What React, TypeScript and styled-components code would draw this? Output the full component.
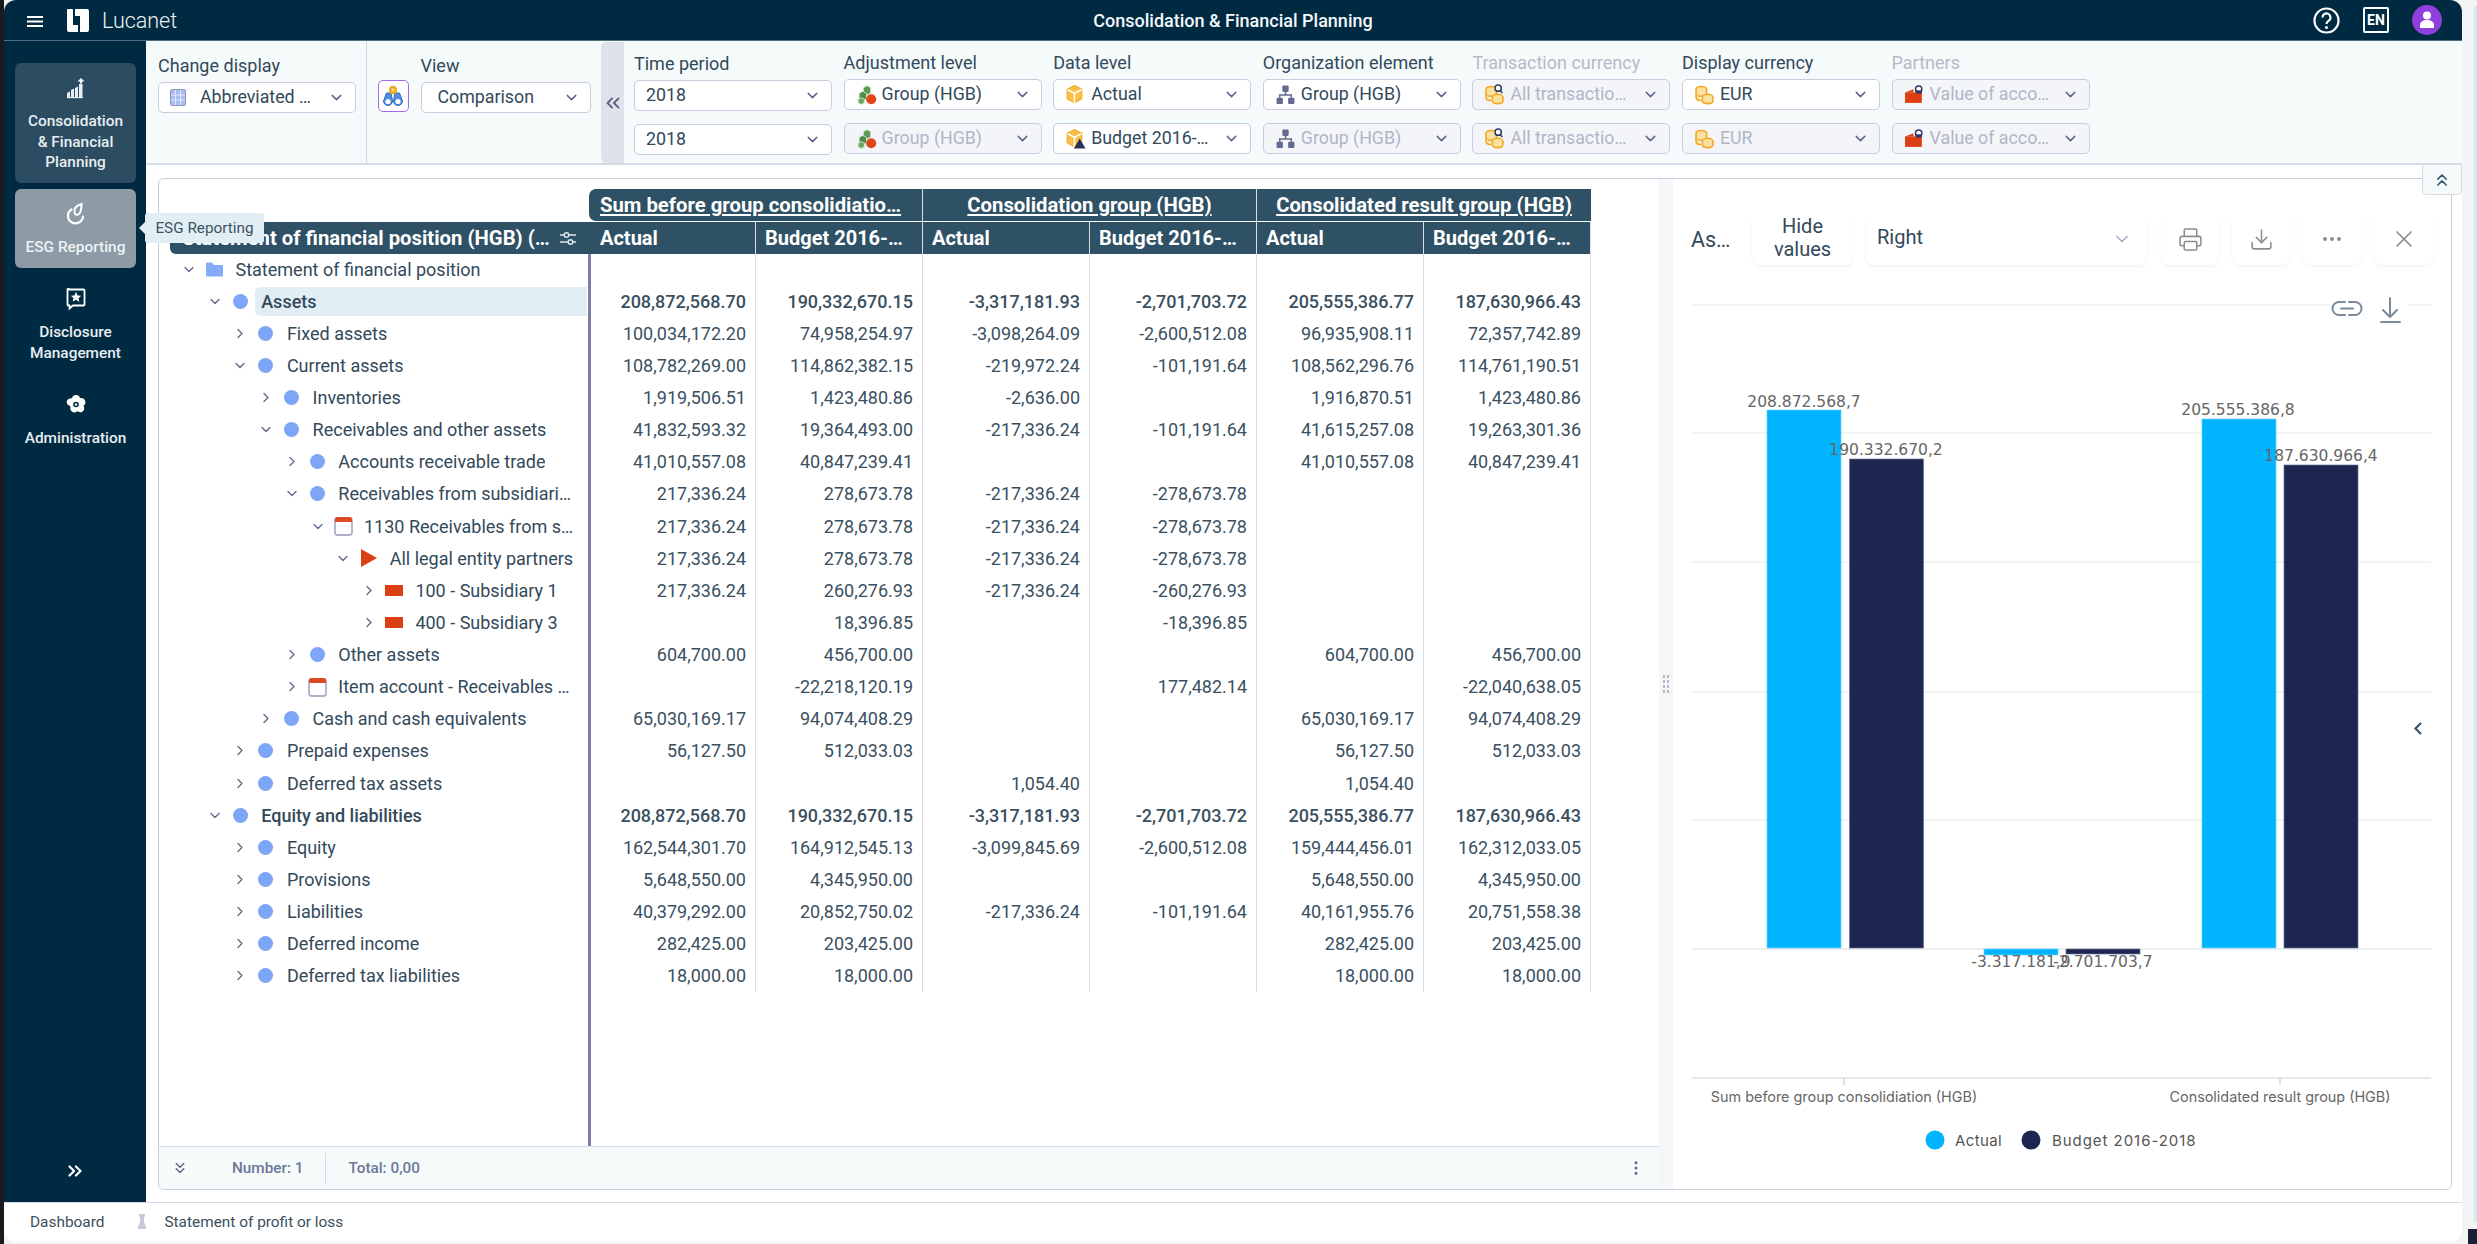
import React from "react";
import styled, { createGlobalStyle } from "styled-components";
import {
  ChevronDown, ChevronRight, ChevronsLeft, ChevronsRight, ChevronsUp, ChevronsDown,
  EllipsisVertical, Ellipsis, Printer, Download, X,
} from "lucide-react";

const Global = createGlobalStyle`
  * { box-sizing: border-box; }
  html, body { margin: 0; padding: 0; width: 2477px; height: 1244px; overflow: hidden; }
  body { font-family: Roboto, "Liberation Sans", sans-serif; color: #2b4153; }
`;

const Page = styled.div`
  width: 2477px; height: 1244px; display: flex; position: relative;
  background: linear-gradient(to right, #1b1b1f 0 4px, #f4f4f5 4px);
`;
const Win = styled.div`
  margin-left: 4px; width: 2458px; height: 1242px; display: flex; flex-direction: column;
  background: #fff; border-radius: 12px; overflow: hidden;
`;
const RightEdge = styled.div`
  flex: 1; display: flex; justify-content: flex-end; flex-direction: column; align-items: flex-end;
`;
const RightStrip = styled.div`
  width: 3px; margin-top: 6px; flex: 1; background: #cfe9fb;
`;
const RightCorner = styled.div`
  width: 9px; height: 15px; margin-top: 6px; background: #1a2035;
`;

const TopBar = styled.header`
  height: 41px; flex: none; background: #002a42; display: grid; grid-template-columns: 1fr auto 1fr;
  align-items: center; color: #fff; border-bottom: 1px solid #54707f;
`;
const Brand = styled.div`
  display: flex; align-items: center; padding-left: 23px;
`;
const BrandName = styled.span`
  font-size: 21.5px; font-weight: 300; margin-left: 12px; color: #eef3f6;
`;
const Title = styled.div`
  font-size: 18px; font-weight: 500; color: #f4f7f9;
`;
const TopIcons = styled.div`
  display: flex; justify-content: flex-end; align-items: center; padding-right: 20px; gap: 23px;
`;
const EnBadge = styled.div`
  width: 26px; height: 26px; border: 2px solid #fff; border-radius: 2px; font-size: 14px; font-weight: 700;
  display: flex; align-items: center; justify-content: center;
`;
const Avatar = styled.div`
  width: 30px; height: 30px; border-radius: 50%; background: #8f3fdc; display: flex; align-items: center; justify-content: center;
`;

const Body = styled.div`
  flex: 1; display: flex; min-height: 0;
`;
const Sidebar = styled.nav`
  width: 142px; flex: none; background: #002a42; padding: 22px 11px 20px; display: flex; flex-direction: column; gap: 6px;
`;
const NavItem = styled.div<{ $tone?: "active" | "hover" }>`
  position: relative; width: 121px; padding: 14px 4px 10.5px; border-radius: 6px; display: flex; flex-direction: column; align-items: center;
  background: ${(p) => (p.$tone === "active" ? "#2c4c61" : p.$tone === "hover" ? "#8c9ba6" : "transparent")};
  color: ${(p) => (p.$tone === "hover" ? "#eef2f5" : "#e8eef2")};
`;
const NavIcon = styled.div`
  height: 22px; margin-bottom: 12px; display: flex; align-items: center; justify-content: center;
`;
const NavText = styled.div`
  font-size: 15.4px; line-height: 20.5px; text-align: center; font-weight: 500; white-space: nowrap;
`;
const Tooltip = styled.div`
  position: absolute; left: calc(100% + 9px); top: 24px; width: 119px; height: 30px; background: #e1eff5; border-radius: 3px;
  font-size: 15.3px; color: #3d5364; display: flex; align-items: center; justify-content: center; z-index: 5; font-weight: 400;
  &::before {
    content: ""; position: absolute; left: -6px; top: 9px; border-style: solid; border-width: 6px 6px 6px 0;
    border-color: transparent #e1eff5 transparent transparent;
  }
`;
const SideExpand = styled.div`
  margin-top: auto; display: flex; justify-content: center; color: #fff;
`;

const Main = styled.main`
  flex: 1; min-width: 0; display: flex; flex-direction: column; position: relative;
`;
const Toolbar = styled.div`
  height: 124px; flex: none; background: #f5fafb; border-bottom: 2px solid #d8dbe6; display: flex;
`;
const ChangeSection = styled.div`
  width: 221px; flex: none; padding: 15px 0 0 12px; border-right: 1.5px solid #d0d3e0;
`;
const ViewSection = styled.div`
  display: flex; width: 234px; flex: none; padding: 15px 0 0 10.5px; gap: 12px;
`;
const ViewIconButton = styled.div`
  width: 31px; height: 32px; margin-top: 24px; background: #fff; border: 1.5px solid #a868ea; border-radius: 5px;
  display: flex; align-items: center; justify-content: center;
`;
const ViewCol = styled.div`
  width: 170px;
`;
const Label = styled.div<{ $muted?: boolean }>`
  font-size: 18px; line-height: 20px; margin-bottom: 6px; white-space: nowrap;
  color: ${(p) => (p.$muted ? "#b6bac9" : "#32495a")};
`;
const Collapse = styled.div`
  width: 23px; height: 121px; margin-top: 1px; flex: none; background: #dfe2ea; border-radius: 5px 0 0 5px; color: #54607f;
  display: flex; align-items: center; justify-content: center;
`;
const Filters = styled.div`
  display: flex; gap: 11.6px; padding-left: 10px;
`;
const FilterCol = styled.div<{ $nudge?: boolean }>`
  width: 198px; padding-top: ${(p) => (p.$nudge ? 13 : 12)}px; display: flex; flex-direction: column;
`;
const Select = styled.div<{ $w?: number; $off?: boolean }>`
  height: 31px; width: ${(p) => (p.$w ? p.$w + "px" : "100%")}; border: 1.5px solid #c9ccdd; border-radius: 5px;
  background: ${(p) => (p.$off ? "#f4f5f8" : "#fff")}; display: flex; align-items: center; padding: 0 10px 2px 11px; flex: none;
  font-size: 17.8px; color: ${(p) => (p.$off ? "#b0b5c7" : "#32495a")}; & + & { margin-top: 13px; }
`;
const SelectIcon = styled.span<{ $wide?: boolean }>`
  display: flex; width: 21px; flex: none; margin-right: ${(p) => (p.$wide ? 9 : 5)}px; align-items: center; padding-top: 2px;
`;
const SelectText = styled.span<{ $inset?: boolean }>`
  flex: 1; white-space: nowrap; overflow: hidden; padding-left: ${(p) => (p.$inset ? 5 : 0)}px;
`;
const Chev = styled.span`
  display: flex; color: #5d6488; margin-left: 4px; padding-top: 2px;
`;

const Panel = styled.section`
  margin: 13px 10px 12px 12px; flex: 1; min-height: 0; border: 1px solid #c8cbdc; border-radius: 6px; display: flex; overflow: hidden;
`;
const CollapseTab = styled.div`
  position: absolute; right: 0; top: 124px; width: 40px; height: 30px; background: #f5fafb; border: 1px solid #d8dbe6; border-top: 0;
  border-radius: 0 0 5px 5px; display: flex; align-items: center; justify-content: center; color: #3a5a70; z-index: 3;
`;
const TablePane = styled.div`
  width: 1500px; flex: none; display: flex; flex-direction: column;
`;
const TableArea = styled.div`
  flex: 1; min-height: 0; display: flex;
`;
const TreePane = styled.div`
  width: 432px; flex: none; display: flex; flex-direction: column; padding-top: 43px;
`;
const TreeHeader = styled.div`
  margin-left: 11px; height: 32px; flex: none; background: #2e5165; color: #fff; font-weight: 700; font-size: 20.3px; border-radius: 6px 0 0 6px;
  display: flex; align-items: center; padding: 0 14px 0 12px; justify-content: space-between; white-space: nowrap;
`;
const TreeBody = styled.div`
  flex: 1; border-right: 3px solid #7b7fa6;
`;
const RowStack = styled.div`
  margin-top: -1px;
`;
const TreeRow = styled.div<{ $level: number }>`
  height: 32.14px; display: flex; align-items: center; padding-left: ${(p) => 22 + 25.7 * p.$level}px; padding-right: 1px;
`;
const Twist = styled.span`
  width: 16px; flex: none; display: flex; justify-content: center; color: #5f6a8a;
`;
const NodeIcon = styled.span`
  width: 29px; margin-left: 3px; flex: none; display: flex; justify-content: center; align-items: center;
`;
const Bullet = styled.span`
  width: 15px; height: 15px; border-radius: 50%; background: #7ea6f7; display: block;
`;
const RowLabel = styled.span<{ $bold?: boolean; $sel?: boolean }>`
  flex: ${(p) => (p.$sel ? 1 : "0 1 auto")}; font-size: 18px; padding-left: 6.5px; white-space: nowrap; overflow: hidden;
  line-height: 29px; font-weight: ${(p) => (p.$bold ? 500 : 400)}; color: #32495a; border-radius: 5px 0 0 5px;
  background: ${(p) => (p.$sel ? "#e1eff5" : "transparent")};
`;
const DataPane = styled.div`
  width: 1000px; padding-top: 10px; display: flex; flex-direction: column;
`;
const GroupRow = styled.div`
  height: 32px; flex: none; display: grid; grid-template-columns: 334px 334px 334px; margin-left: -2px; background: #2e5165; border-radius: 7px 0 0 7px;
`;
const GroupCell = styled.div<{ $left?: boolean }>`
  color: #fff; font-weight: 700; font-size: 20.3px; text-decoration: underline; display: flex; align-items: center;
  justify-content: ${(p) => (p.$left ? "flex-start" : "center")}; padding-left: ${(p) => (p.$left ? 11 : 0)}px;
  border-right: 1.5px solid #d8dde6; white-space: nowrap; &:last-child { border-right: 0; }
`;
const Cols = styled.div`
  display: grid; grid-template-columns: 165px repeat(5, 167px);
`;
const HeadRow = styled(Cols)`
  height: 32px; flex: none; margin-top: 1px; background: #2e5165;
`;
const HeadCell = styled.div`
  color: #fff; font-weight: 700; font-size: 20px; padding-left: 9px; display: flex; align-items: center; white-space: nowrap;
  border-right: 1.5px solid #d8dde6;
`;
const DataRow = styled(Cols)`
  height: 32.14px;
`;
const Cell = styled.div<{ $bold?: boolean }>`
  border-right: 1.5px solid #d9dbe7; display: flex; align-items: center; justify-content: flex-end; padding-right: 9px;
  font-size: 18px; font-weight: ${(p) => (p.$bold ? 500 : 400)}; color: #3a5061; white-space: nowrap;
`;
const Footer = styled.div`
  height: 43px; flex: none; background: #f5fafb; border-top: 1.5px solid #d8dbe6; display: flex; align-items: center; color: #6d7798;
  font-size: 15.3px; font-weight: 500;
`;
const FootChev = styled.span`
  display: flex; width: 73px; padding-left: 12px; color: #5f6a8a;
`;
const FootCell = styled.span`
  display: flex; align-items: center; height: 31px; padding-right: 22px; & + & { border-left: 1.5px solid #d8dbe6; padding-left: 22px; }
`;
const FootMore = styled.span`
  margin-left: auto; margin-right: 14px; display: flex; color: #5f6a8a;
`;
const Splitter = styled.div`
  width: 14px; flex: none; background: #f5f6f7; display: flex; align-items: center; justify-content: center;
`;
const Grip = styled.div`
  display: grid; grid-template-columns: 2px 2px; gap: 2px;
  & > i { width: 2px; height: 3px; background: #b5b8c6; display: block; }
`;
const ChartPane = styled.div`
  flex: 1; min-width: 0; display: flex; flex-direction: column; position: relative;
`;
const ChartHead = styled.div`
  height: 101px; flex: none; padding: 34px 0 0 18px; display: flex; align-items: flex-start;
`;
const ChartTitle = styled.div`
  width: 61px; height: 52px; font-size: 21.5px; display: flex; align-items: center; color: #32495a; flex: none;
`;
const GhostButton = styled.div<{ $w: number; $gap?: number }>`
  width: ${(p) => p.$w}px; height: 52px; flex: none; margin-right: ${(p) => p.$gap ?? 13}px; border-radius: 8px; background: #fff;
  box-shadow: 0 2px 3px rgba(40, 50, 80, .06); display: flex; align-items: center; justify-content: center; color: #8a8d94;
`;
const HideText = styled.span`
  font-size: 20px; line-height: 23px; color: #32495a; text-align: center; padding-bottom: 3px;
`;
const RightSelect = styled(GhostButton)`
  justify-content: space-between; padding: 0 15px 5px 11px; color: #32495a; font-size: 20px;
`;
const ChevLight = styled.span`
  display: flex; color: #a8adc4; padding-top: 5px;
`;
const ChartSvg = styled.svg`
  display: block; flex: none;
`;
const BottomBar = styled.footer`
  height: 40px; flex: none; border-top: 1.5px solid #d8dbe6; display: flex; align-items: center; padding: 0 0 2px 26px; font-size: 15.4px; color: #3a4f60;
`;
const BottomSep = styled.span`
  display: flex; margin: 0 16px 0 32px;
`;

const S = ({ size = 20, children }: { size?: number; children: React.ReactNode }) => (
  <svg width={size} height={size} viewBox="0 0 20 20">{children}</svg>
);

const Burger = () => (
  <svg width="16" height="11" viewBox="0 0 16 11" style={{ marginRight: 23, marginTop: 2 }}>
    <path d="M0 1h16M0 5.500h16M0 10h16" stroke="#fff" strokeWidth="1.800" />
  </svg>
);
const Logo = () => (
  <svg width="24" height="25" viewBox="0 0 24 25">
    <path d="M1 2a1 1 0 0 1 1-1h4a1 1 0 0 1 1 1v15h5v7H3a2 2 0 0 1-2-2z" fill="#fff" />
    <path d="M9 1h12a2 2 0 0 1 2 2v19a2 2 0 0 1-2 2h-7V8H9z" fill="#fff" />
  </svg>
);
const Help = () => (
  <svg width="27" height="27" viewBox="0 0 27 27">
    <circle cx="13.500" cy="13.500" r="12" fill="none" stroke="#fff" strokeWidth="2.200" />
    <path d="M9.500 10.500a4 4 0 1 1 6.300 3.200c-1.500 1-2.300 1.700-2.300 3.300" fill="none" stroke="#fff" strokeWidth="2.200" />
    <circle cx="13.500" cy="20.500" r="1.500" fill="#fff" />
  </svg>
);
const User = () => (
  <svg width="16" height="18" viewBox="0 0 16 18">
    <circle cx="8" cy="4.500" r="4" fill="#fff" />
    <path d="M1 17v-3c0-3 3-5 7-5s7 2 7 5v3z" fill="#fff" />
  </svg>
);
const NavChart = () => (
  <svg width="20" height="22" viewBox="0 0 20 22">
    <path d="M1 20v-4l3-1.500V20zM5 20v-7l3-1.500V20zM9 20v-9l3-1.500V20zM13 20V7h3.500v13z" fill="#e8eef2" />
    <path d="M15 1l3.500 3.500H16v2h-2v-2h-2.500z" fill="#fff" />
    <rect x="1" y="20" width="16" height="1.200" fill="#e8eef2" />
  </svg>
);
const NavEsg = () => (
  <svg width="20" height="24" viewBox="0 0 20 24">
    <path d="M5.500 7.500a7.500 7.500 0 1 0 11.500 7" fill="none" stroke="#fff" strokeWidth="2.200" strokeLinecap="round" />
    <path d="M15.500 2c-5 1.500-8 4-7 8.500.5 2.500 3 3 4.500 1.500 2-2 2.500-6 2.500-10z" fill="none" stroke="#fff" strokeWidth="2" />
  </svg>
);
const NavStar = () => (
  <svg width="20" height="22" viewBox="0 0 20 22">
    <path d="M2.500 1.500h15a1 1 0 0 1 1 1v14a1 1 0 0 1-1 1H7l-3.500 3v-3h-1a1 1 0 0 1-1-1v-15a1 1 0 0 1 1-1z" fill="none" stroke="#fff" strokeWidth="1.800" />
    <path d="M10 4l1.600 3.400 3.600.4-2.700 2.500.8 3.700L10 11.800 6.700 13.600l.8-3.700L4.800 7.800l3.600-.4z" fill="#fff" />
  </svg>
);
const NavFlower = () => (
  <svg width="22" height="22" viewBox="0 0 22 22">
    <path d="M11 1c2.500 0 3.800 1.600 4 3.200 2-.6 4.500.4 5.200 2.700.7 2.300-.3 4-1.700 4.800 1.100 1.700 1.100 4.300-.9 5.700-2 1.400-4 .9-5.100-.3-1 1.300-3.500 2-5.400.6-2-1.400-2.200-3.700-1.400-5.100C4.300 11.800 1.100 10 1.800 7.200 2.500 4.900 5 3.800 7 4.300 7.200 2.600 8.500 1 11 1z" fill="#fff" />
    <circle cx="11" cy="10.500" r="2.800" fill="#002a42" />
    <circle cx="11" cy="10.500" r="1.200" fill="#fff" />
  </svg>
);
const TableIcon = () => (
  <svg width="16" height="17" viewBox="0 0 16 17">
    <rect x=".5" y=".5" width="15" height="16" rx="1.500" fill="#a9bdf3" stroke="#8a98b8" />
    <path d="M5.500 1v15M10.500 1v15M1 6h14M1 11h14" stroke="#dfe7fb" strokeWidth="1" />
  </svg>
);
const CompareIcon = () => (
  <svg width="22" height="24" viewBox="0 0 22 24">
    <path d="M4.500 9L1.500 17a4.500 4.500 0 1 0 9 0L9 9z" fill="#4f8fe2" stroke="#2d6bc4" strokeWidth="1" />
    <path d="M13 9l-1.500 8a4.500 4.500 0 1 0 9 0L17.500 9z" fill="#4f8fe2" stroke="#2d6bc4" strokeWidth="1" />
    <circle cx="6" cy="17.500" r="2.600" fill="#fff" />
    <circle cx="16" cy="17.500" r="2.600" fill="#fff" />
    <circle cx="11" cy="6" r="4.200" fill="#f2a922" />
    <circle cx="11" cy="6" r="1.400" fill="#ffe3a6" />
  </svg>
);
const Cubes = () => (
  <S size={21}>
    <path d="M7 3.500l3.500-2 3.500 2v5l-3.500 2-3.500-2z" fill="#5c9a55" stroke="#d7ecd3" strokeWidth=".8" />
    <path d="M3 9l3.500-2 3.500 2v5l-3.500 2L3 14z" fill="#4f8c49" stroke="#d7ecd3" strokeWidth=".8" />
    <path d="M2 14.500l3-1.500 3 1.500v3.500l-3 1.500-3-1.500z" fill="#6aa863" stroke="#d7ecd3" strokeWidth=".8" />
    <circle cx="14.500" cy="14.500" r="4.800" fill="#e0461a" />
  </S>
);
const Box = ({ warn }: { warn?: boolean }) => (
  <S size={21}>
    <path d="M9 1.500l7 3.500v9l-7 4-7-4V5z" fill="#f8c04a" stroke="#f2a922" strokeWidth="1" />
    <path d="M2.500 5.500L9 9l6.500-3.500M9 9v9" stroke="#fff" strokeWidth="1.500" fill="none" />
    {warn ? <path d="M14 10l5.500 9.500h-11z" fill="#2a2f58" /> : null}
  </S>
);
const Org = () => (
  <S size={21}>
    <rect x="7" y="1.500" width="6" height="6" rx="1" fill="#62698f" />
    <rect x="1.500" y="13" width="6" height="6" rx="1" fill="#62698f" />
    <rect x="12.500" y="13" width="6" height="6" rx="1" fill="#62698f" />
    <path d="M10 7v3.500M4.500 13v-2.500h11V13" fill="none" stroke="#62698f" strokeWidth="1.500" />
  </S>
);
const Coins = ({ search }: { search?: boolean }) => (
  <S size={21}>
    <g fill="#fbe1a0" stroke="#f2a922" strokeWidth="1.500">
      <ellipse cx="7" cy="5" rx="5" ry="2.700" />
      <path d="M2 5v4c0 1.500 2.200 2.700 5 2.700s5-1.200 5-2.700V5" />
      <path d="M2 9v4c0 1.500 2.200 2.700 5 2.700" />
      <ellipse cx="13" cy="12.500" rx="5" ry="2.700" />
      <path d="M8 12.500v3.500c0 1.500 2.200 2.700 5 2.700s5-1.200 5-2.700v-3.500" />
    </g>
    {search ? (
      <g fill="none" stroke="#2f3a66" strokeWidth="1.400">
        <circle cx="13.500" cy="4" r="3" fill="#fff" />
        <path d="M15.500 6.500l2 2" />
      </g>
    ) : null}
  </S>
);
const Partner = () => (
  <S size={21}>
    <rect x="1" y="8" width="16" height="10" fill="#dd3f12" />
    <path d="M1 8l8-3v3z" fill="#dd3f12" />
    <circle cx="14" cy="5" r="3" fill="#fff" stroke="#2f3a66" strokeWidth="1.400" />
    <rect x="11" y="6" width="6" height="3" fill="#2f3a66" />
  </S>
);
const Folder = () => (
  <svg width="19" height="15" viewBox="0 0 19 15">
    <path d="M1 1.500a1 1 0 0 1 1-1h5l2 2.500h8a1 1 0 0 1 1 1v9.500a1 1 0 0 1-1 1H2a1 1 0 0 1-1-1z" fill="#85aaf7" />
  </svg>
);
const Account = () => (
  <svg width="19" height="20" viewBox="0 0 19 20">
    <rect x="1" y="2" width="17" height="17" rx="2.500" fill="#fff" stroke="#adb0c8" strokeWidth="1.800" />
    <path d="M1 6V3.500A2.500 2.500 0 0 1 3.500 1h12A2.500 2.500 0 0 1 18 3.500V6z" fill="#dd4a24" />
  </svg>
);
const PartnerPlay = () => (
  <svg width="18" height="20" viewBox="0 0 18 20">
    <path d="M1 1l16 9-16 9z" fill="#dc3f13" />
  </svg>
);
const PartnerBar = () => (
  <svg width="18" height="11" viewBox="0 0 18 11"><rect width="18" height="11" fill="#dc3f13" /></svg>
);
const Pawn = () => (
  <svg width="12" height="17" viewBox="0 0 12 17">
    <path d="M3 1h6v2l-1 1v5l2 5v2H2v-2l2-5V4L3 3z" fill="#c6cad8" />
  </svg>
);
const TwoSliders = () => (
  <svg width="18" height="15" viewBox="0 0 18 15" fill="none" stroke="#dfe6ea" strokeWidth="1.500">
    <path d="M1 4h4M10 4h7M1 11h8M14 11h3" />
    <circle cx="7.500" cy="4" r="2.300" />
    <circle cx="11.500" cy="11" r="2.300" />
  </svg>
);

type Node = { l: number; t: string; open?: boolean; k?: "folder" | "bullet" | "account" | "play" | "bar"; b?: boolean; s?: boolean; v?: string[] };
const sub = ["217,336.24", "278,673.78", "-217,336.24", "-278,673.78", "", ""];
const total = ["208,872,568.70", "190,332,670.15", "-3,317,181.93", "-2,701,703.72", "205,555,386.77", "187,630,966.43"];
const rows: Node[] = [
  { l: 0, t: "Statement of financial position", open: true, k: "folder" },
  { l: 1, t: "Assets", open: true, b: true, s: true, v: total },
  { l: 2, t: "Fixed assets", v: ["100,034,172.20", "74,958,254.97", "-3,098,264.09", "-2,600,512.08", "96,935,908.11", "72,357,742.89"] },
  { l: 2, t: "Current assets", open: true, v: ["108,782,269.00", "114,862,382.15", "-219,972.24", "-101,191.64", "108,562,296.76", "114,761,190.51"] },
  { l: 3, t: "Inventories", v: ["1,919,506.51", "1,423,480.86", "-2,636.00", "", "1,916,870.51", "1,423,480.86"] },
  { l: 3, t: "Receivables and other assets", open: true, v: ["41,832,593.32", "19,364,493.00", "-217,336.24", "-101,191.64", "41,615,257.08", "19,263,301.36"] },
  { l: 4, t: "Accounts receivable trade", v: ["41,010,557.08", "40,847,239.41", "", "", "41,010,557.08", "40,847,239.41"] },
  { l: 4, t: "Receivables from subsidiari…", open: true, v: sub },
  { l: 5, t: "1130 Receivables from s…", open: true, k: "account", v: sub },
  { l: 6, t: "All legal entity partners", open: true, k: "play", v: sub },
  { l: 7, t: "100 - Subsidiary 1", k: "bar", v: ["217,336.24", "260,276.93", "-217,336.24", "-260,276.93", "", ""] },
  { l: 7, t: "400 - Subsidiary 3", k: "bar", v: ["", "18,396.85", "", "-18,396.85", "", ""] },
  { l: 4, t: "Other assets", v: ["604,700.00", "456,700.00", "", "", "604,700.00", "456,700.00"] },
  { l: 4, t: "Item account - Receivables …", k: "account", v: ["", "-22,218,120.19", "", "177,482.14", "", "-22,040,638.05"] },
  { l: 3, t: "Cash and cash equivalents", v: ["65,030,169.17", "94,074,408.29", "", "", "65,030,169.17", "94,074,408.29"] },
  { l: 2, t: "Prepaid expenses", v: ["56,127.50", "512,033.03", "", "", "56,127.50", "512,033.03"] },
  { l: 2, t: "Deferred tax assets", v: ["", "", "1,054.40", "", "1,054.40", ""] },
  { l: 1, t: "Equity and liabilities", open: true, b: true, v: total },
  { l: 2, t: "Equity", v: ["162,544,301.70", "164,912,545.13", "-3,099,845.69", "-2,600,512.08", "159,444,456.01", "162,312,033.05"] },
  { l: 2, t: "Provisions", v: ["5,648,550.00", "4,345,950.00", "", "", "5,648,550.00", "4,345,950.00"] },
  { l: 2, t: "Liabilities", v: ["40,379,292.00", "20,852,750.02", "-217,336.24", "-101,191.64", "40,161,955.76", "20,751,558.38"] },
  { l: 2, t: "Deferred income", v: ["282,425.00", "203,425.00", "", "", "282,425.00", "203,425.00"] },
  { l: 2, t: "Deferred tax liabilities", v: ["18,000.00", "18,000.00", "", "", "18,000.00", "18,000.00"] },
];
const nodeIcon = (k?: Node["k"]) => {
  if (k === "folder") return <Folder />;
  if (k === "account") return <Account />;
  if (k === "play") return <PartnerPlay />;
  if (k === "bar") return <PartnerBar />;
  return <Bullet />;
};

type Sel = { text: string; icon?: React.ReactNode; off?: boolean };
const filters: { label: string; muted?: boolean; nudge?: boolean; items: Sel[] }[] = [
  { label: "Time period", nudge: true, items: [{ text: "2018" }, { text: "2018" }] },
  { label: "Adjustment level", items: [{ text: "Group (HGB)", icon: <Cubes /> }, { text: "Group (HGB)", icon: <Cubes />, off: true }] },
  { label: "Data level", items: [{ text: "Actual", icon: <Box /> }, { text: "Budget 2016-…", icon: <Box warn /> }] },
  { label: "Organization element", items: [{ text: "Group (HGB)", icon: <Org /> }, { text: "Group (HGB)", icon: <Org />, off: true }] },
  { label: "Transaction currency", muted: true, items: [{ text: "All transactio…", icon: <Coins search />, off: true }, { text: "All transactio…", icon: <Coins search />, off: true }] },
  { label: "Display currency", items: [{ text: "EUR", icon: <Coins /> }, { text: "EUR", icon: <Coins />, off: true }] },
  { label: "Partners", muted: true, items: [{ text: "Value of acco…", icon: <Partner />, off: true }, { text: "Value of acco…", icon: <Partner />, off: true }] },
];

const bars = [
  { x: 1767, y: 410, h: 538, c: "#00b4ff", t: "208.872.568,7", tx: 1804, ly: 407 },
  { x: 1849.5, y: 459, h: 489, c: "#1d2650", t: "190.332.670,2", tx: 1886, ly: 455 },
  { x: 1984, y: 949, h: 6, c: "#00b4ff", t: "-3.317.181,9", tx: 2021, ly: 967 },
  { x: 2066, y: 949, h: 5, c: "#1d2650", t: "-2.701.703,7", tx: 2103, ly: 967 },
  { x: 2202, y: 419, h: 529, c: "#00b4ff", t: "205.555.386,8", tx: 2238, ly: 415 },
  { x: 2284, y: 465, h: 483, c: "#1d2650", t: "187.630.966,4", tx: 2321, ly: 461 },
];

const Chart = () => (
  <ChartSvg width={778} height={910} viewBox="1673 280 778 910">
    {[305, 433, 562, 692, 820, 949].map((y) => (
      <line key={y} x1={1692} x2={2431} y1={y} y2={y} stroke={y === 949 ? "#e6e7ea" : "#eeeff1"} strokeWidth={1.5} />
    ))}
    <rect x={2330} y={296} width={78} height={24} fill="#fff" />
    <g fill="none" stroke="#7b8a9b" strokeWidth="2" strokeLinecap="round">
      <path d="M2345 302h-6a6 6 0 0 0 0 13h6M2349 302h6a6 6 0 0 1 0 13h-6M2341 308.500h12" />
      <path d="M2390 298v19M2383 310l7 7 7-7M2381 322h19" />
    </g>
    {bars.map((b) => (
      <rect key={b.x} x={b.x} y={b.y} width={74} height={b.h} fill={b.c} stroke={b.c === "#00b4ff" ? "#69d2ff" : "#6c7295"} strokeWidth={0.7} />
    ))}
    {bars.map((b) => (
      <text key={b.t} x={b.tx} y={b.ly} textAnchor="middle" fontFamily="'DejaVu Sans', sans-serif" fontSize="15.500" fill="#666">{b.t}</text>
    ))}
    <line x1={1692} x2={2431} y1={1078} y2={1078} stroke="#dfe0e4" strokeWidth={1.5} />
    <line x1={1844} x2={1844} y1={1078} y2={1085} stroke="#c9cad0" strokeWidth={1.200} />
    <line x1={2280} x2={2280} y1={1078} y2={1085} stroke="#c9cad0" strokeWidth={1.200} />
    <text x={1844} y={1102} textAnchor="middle" fontFamily="Inter, sans-serif" fontSize="14.400" fill="#666">Sum before group consolidiation (HGB)</text>
    <text x={2280} y={1102} textAnchor="middle" fontFamily="Inter, sans-serif" fontSize="14.400" fill="#666">Consolidated result group (HGB)</text>
    <circle cx={1935} cy={1140} r={9.500} fill="#00b4ff" />
    <text x={1955} y={1145.500} fontFamily="Inter, sans-serif" fontSize="15" fill="#555" letterSpacing=".4">Actual</text>
    <circle cx={2031} cy={1140} r={9.500} fill="#1d2650" />
    <text x={2052} y={1145.500} fontFamily="Inter, sans-serif" fontSize="15" fill="#555" letterSpacing=".95">Budget 2016-2018</text>
    <g fill="none" stroke="#34566e" strokeWidth="2.200"><path d="M2421 723l-5.500 5.500 5.500 5.500" /></g>
  </ChartSvg>
);

export default function App() {
  return (
    <Page>
      <Global />
      <Win>
        <TopBar>
          <Brand>
            <Burger />
            <Logo />
            <BrandName>Lucanet</BrandName>
          </Brand>
          <Title>Consolidation &amp; Financial Planning</Title>
          <TopIcons>
            <Help />
            <EnBadge>EN</EnBadge>
            <Avatar><User /></Avatar>
          </TopIcons>
        </TopBar>
        <Body>
          <Sidebar>
            <NavItem $tone="active">
              <NavIcon><NavChart /></NavIcon>
              <NavText>Consolidation<br />&amp; Financial<br />Planning</NavText>
            </NavItem>
            <NavItem $tone="hover">
              <NavIcon><NavEsg /></NavIcon>
              <NavText>ESG Reporting</NavText>
              <Tooltip>ESG Reporting</Tooltip>
            </NavItem>
            <NavItem>
              <NavIcon><NavStar /></NavIcon>
              <NavText>Disclosure<br />Management</NavText>
            </NavItem>
            <NavItem>
              <NavIcon><NavFlower /></NavIcon>
              <NavText>Administration</NavText>
            </NavItem>
            <SideExpand><ChevronsRight size={22} strokeWidth={2.4} /></SideExpand>
          </Sidebar>
          <Main>
            <Toolbar>
              <ChangeSection>
                <Label>Change display</Label>
                <Select $w={198}>
                  <SelectIcon $wide><TableIcon /></SelectIcon>
                  <SelectText>Abbreviated …</SelectText>
                  <Chev><ChevronDown size={17} /></Chev>
                </Select>
              </ChangeSection>
              <ViewSection>
                <ViewIconButton><CompareIcon /></ViewIconButton>
                <ViewCol>
                  <Label>View</Label>
                  <Select $w={170}>
                    <SelectText $inset>Comparison</SelectText>
                    <Chev><ChevronDown size={17} /></Chev>
                  </Select>
                </ViewCol>
              </ViewSection>
              <Collapse><ChevronsLeft size={22} /></Collapse>
              <Filters>
                {filters.map((f) => (
                  <FilterCol key={f.label} $nudge={f.nudge}>
                    <Label $muted={f.muted}>{f.label}</Label>
                    {f.items.map((s, i) => (
                      <Select key={i} $off={s.off}>
                        {s.icon ? <SelectIcon>{s.icon}</SelectIcon> : null}
                        <SelectText>{s.text}</SelectText>
                        <Chev><ChevronDown size={17} /></Chev>
                      </Select>
                    ))}
                  </FilterCol>
                ))}
              </Filters>
            </Toolbar>
            <CollapseTab><ChevronsUp size={20} /></CollapseTab>
            <Panel>
              <TablePane>
                <TableArea>
                  <TreePane>
                    <TreeHeader>
                      <span>Statement of financial position (HGB) (…</span>
                      <TwoSliders />
                    </TreeHeader>
                    <TreeBody>
                      <RowStack>
                        {rows.map((r) => (
                          <TreeRow key={r.t + r.l} $level={r.l}>
                            <Twist>{r.open ? <ChevronDown size={17} /> : <ChevronRight size={17} />}</Twist>
                            <NodeIcon>{nodeIcon(r.k)}</NodeIcon>
                            <RowLabel $bold={r.b} $sel={r.s}>{r.t}</RowLabel>
                          </TreeRow>
                        ))}
                      </RowStack>
                    </TreeBody>
                  </TreePane>
                  <DataPane>
                    <GroupRow>
                      <GroupCell $left>Sum before group consolidiatio…</GroupCell>
                      <GroupCell>Consolidation group (HGB)</GroupCell>
                      <GroupCell>Consolidated result group (HGB)</GroupCell>
                    </GroupRow>
                    <HeadRow>
                      {["Actual", "Budget 2016-…", "Actual", "Budget 2016-…", "Actual", "Budget 2016-…"].map((h, i) => (
                        <HeadCell key={i}>{h}</HeadCell>
                      ))}
                    </HeadRow>
                    <RowStack>
                      {rows.map((r) => (
                        <DataRow key={r.t + r.l}>
                          {(r.v ?? ["", "", "", "", "", ""]).map((v, i) => (
                            <Cell key={i} $bold={r.b}>{v}</Cell>
                          ))}
                        </DataRow>
                      ))}
                    </RowStack>
                  </DataPane>
                </TableArea>
                <Footer>
                  <FootChev><ChevronsDown size={18} /></FootChev>
                  <FootCell>Number: 1</FootCell>
                  <FootCell>Total: 0,00</FootCell>
                  <FootMore><EllipsisVertical size={18} /></FootMore>
                </Footer>
              </TablePane>
              <Splitter>
                <Grip>{Array.from({ length: 8 }).map((_, i) => <i key={i} />)}</Grip>
              </Splitter>
              <ChartPane>
                <ChartHead>
                  <ChartTitle>As…</ChartTitle>
                  <GhostButton $w={101}><HideText>Hide<br />values</HideText></GhostButton>
                  <RightSelect $w={281} $gap={14}>
                    <span>Right</span>
                    <ChevLight><ChevronDown size={20} /></ChevLight>
                  </RightSelect>
                  <GhostButton $w={58}><Printer size={25} strokeWidth={1.5} /></GhostButton>
                  <GhostButton $w={58}><Download size={25} strokeWidth={1.5} /></GhostButton>
                  <GhostButton $w={58}><Ellipsis size={24} strokeWidth={2} /></GhostButton>
                  <GhostButton $w={59} $gap={0}><X size={28} strokeWidth={1.5} /></GhostButton>
                </ChartHead>
                <Chart />
              </ChartPane>
            </Panel>
          </Main>
        </Body>
        <BottomBar>
          <span>Dashboard</span>
          <BottomSep><Pawn /></BottomSep>
          <span>Statement of profit or loss</span>
        </BottomBar>
      </Win>
      <RightEdge>
        <RightStrip />
        <RightCorner />
      </RightEdge>
    </Page>
  );
}
